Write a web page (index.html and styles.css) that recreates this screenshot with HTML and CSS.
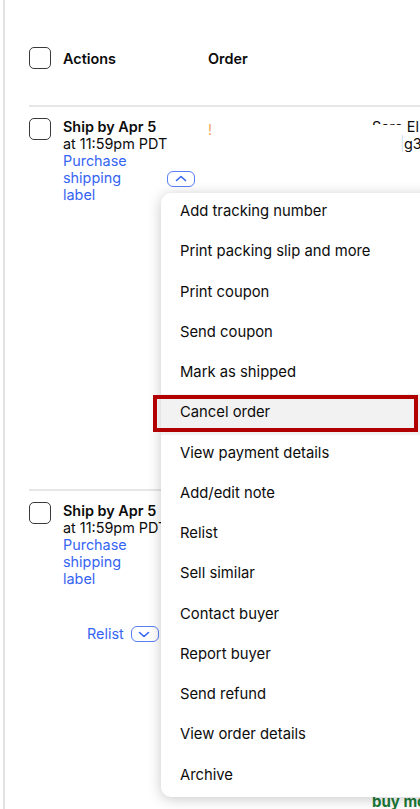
FILE: index.html
```html
<!DOCTYPE html>
<html lang="en">

<head>
  <meta charset="utf-8" />
  <meta name="viewport" content="width=device-width, initial-scale=1" />
  <title>Orders</title>
  <link rel="stylesheet" href="styles.css">
</head>

<body>
  <div class="page">
    <div class="thead">
      <span class="checkbox"></span>
      <span class="th">Actions</span>
      <span class="th">Order</span>
    </div>

    <div class="row row-first">
      <span class="checkbox"></span>
      <div class="cell-actions">
        <div class="ship">Ship by Apr 5</div>
        <div>at 11:59pm PDT</div>
        <div class="label-line">
          <a class="link label-link">Purchase shipping label</a>
          <button class="chev chev-up" aria-label="Collapse">
            <svg width="28" height="16" viewBox="0 0 28 16" fill="none">
              <path d="M9.5 9.5 14 5.5l4.5 4" stroke="#3665f3" stroke-width="1.6" stroke-linecap="round" stroke-linejoin="round" />
            </svg>
          </button>
        </div>
      </div>
      <div class="cell-order">
        <span class="flag">!</span>
      </div>
      <div class="cell-buyer">
        <div><span class="clip">Sara</span> El</div>
        <div><span class="handle">g3</span></div>
      </div>
    </div>

    <div class="row">
      <span class="checkbox"></span>
      <div class="cell-actions">
        <div class="ship">Ship by Apr 5</div>
        <div>at 11:59pm PDT</div>
        <a class="link label-link">Purchase shipping label</a>
        <div class="relist-line">
          <a class="link">Relist</a>
          <button class="chev" aria-label="Expand">
            <svg width="28" height="16" viewBox="0 0 28 16" fill="none">
              <path d="M9.5 6.5 14 10.5l4.5-4" stroke="#3665f3" stroke-width="1.6" stroke-linecap="round" stroke-linejoin="round" />
            </svg>
          </button>
        </div>
      </div>
      <div class="cell-order"></div>
      <div class="cell-buyer">
        <div class="buy-more">buy more</div>
      </div>
    </div>

    <!-- actions menu, open over the first row -->
    <ul class="menu">
      <li>Add tracking number</li>
      <li>Print packing slip and more</li>
      <li>Print coupon</li>
      <li>Send coupon</li>
      <li>Mark as shipped</li>
      <li class="hover">Cancel order</li>
      <li>View payment details</li>
      <li>Add/edit note</li>
      <li>Relist</li>
      <li>Sell similar</li>
      <li>Contact buyer</li>
      <li>Report buyer</li>
      <li>Send refund</li>
      <li>View order details</li>
      <li>Archive</li>
    </ul>
    <div class="callout"></div>
  </div>
</body>

</html>
```

FILE: styles.css
```css
html,
body {
  margin: 0;
  height: 100%;
  overflow: hidden;
  background: #fff;
}

body {
  font-family: Inter, "Noto Sans", sans-serif;
  font-size: 14.4px;
  line-height: 17px;
  color: #0c0c0c;
}

.page {
  position: relative;
  height: 809px;
  margin-left: 3px;
  padding-left: 24px;
  border-left: 2px solid #e2e2e2;
}

.checkbox {
  display: block;
  width: 22px;
  height: 22px;
  box-sizing: border-box;
  border: 1.5px solid #3a3a3a;
  border-radius: 5px;
}

.thead {
  display: grid;
  grid-template-columns: 34px 145px 1fr;
  align-items: center;
  padding-top: 47px;
  padding-bottom: 36px;
}

.th {
  font-weight: 600;
}

.row {
  display: grid;
  grid-template-columns: 34px 145px 164px 1fr;
  align-items: start;
  padding-top: 11px;
  border-top: 2px solid #e6e6e6;
  white-space: nowrap;
}

.row-first {
  height: 384px;
  box-sizing: border-box;
}

.ship {
  font-weight: 600;
}

.link {
  color: #3665f3;
  text-decoration: none;
}

.label-link {
  display: block;
  width: 72px;
  white-space: normal;
}

.label-line {
  display: flex;
  align-items: center;
}

.label-line .label-link {
  flex: 0 0 72px;
}

.label-line .chev {
  margin-top: 3px;
  margin-left: 32px;
}

.chev {
  display: block;
  width: 28px;
  height: 16px;
  padding: 0;
  box-sizing: border-box;
  border: 1.3px solid #5a7ef5;
  border-radius: 6px;
  background: #fff;
}

.chev svg {
  display: block;
  margin: -1.3px;
}

.relist-line {
  display: flex;
  align-items: center;
  gap: 7px;
  margin-top: 38px;
  padding-left: 24px;
}

.flag {
  display: block;
  margin-top: 3px;
  font-size: 14px;
  color: #f2a55e;
}

.clip {
  display: inline-block;
  height: 7px;
  overflow: hidden;
  vertical-align: top;
}

.handle {
  margin-left: 30px;
  padding-left: 1px;
  border-left: 1px solid #d6e4f7;
}

.buy-more {
  margin-top: 291px;
  font-size: 15px;
  font-weight: 700;
  color: #1c7a37;
}

.menu {
  position: absolute;
  left: 156px;
  top: 193px;
  width: 300px;
  margin: 0;
  padding: 0;
  list-style: none;
  background: #fff;
  border-radius: 10px;
  box-shadow: 0 2px 14px rgba(0, 0, 0, 0.22);
  font-size: 14.8px;
  white-space: nowrap;
}

.menu li {
  height: 40.27px;
  box-sizing: border-box;
  padding: 8px 19px 0;
  line-height: 20px;
}

.menu li.hover {
  background: #f2f2f2;
}

.callout {
  position: absolute;
  left: 148px;
  top: 395px;
  width: 265px;
  height: 37px;
  box-sizing: border-box;
  border: 4px solid #b00000;
}
```
